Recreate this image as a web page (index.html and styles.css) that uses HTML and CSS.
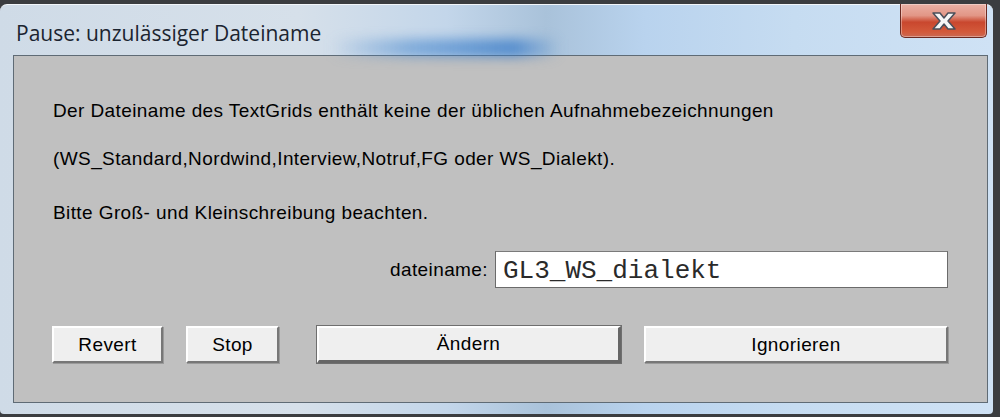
FILE: index.html
```html
<!DOCTYPE html>
<html>
<head>
	<title>Pause: unzulässiger Dateiname</title>
	<meta charset="utf-8">
	<link rel="stylesheet" href="styles.css">
</head>
<body>
	<div class="window">
		<div class="titlebar">
			<span class="title">Pause: unzulässiger Dateiname</span>
			<div class="glow"></div>
			<button class="close" title="Schließen">
				<svg width="34" height="22" viewBox="0 0 34 22">
					<path d="M6 3 L13 3 L17 8 L21 3 L28 3 L21 11 L28 19 L21 19 L17 14 L13 19 L6 19 L13 11 Z" fill="#f6f6f6" stroke="#4a4f5a" stroke-width="1.5" stroke-linejoin="round"/>
				</svg>
			</button>
		</div>
		<div class="client">
			<p class="line first">Der Dateiname des TextGrids enthält keine der üblichen Aufnahmebezeichnungen</p>
			<p class="line second">(WS_Standard,Nordwind,Interview,Notruf,FG oder WS_Dialekt).</p>
			<p class="line third">Bitte Groß- und Kleinschreibung beachten.</p>
			<div class="field">
				<label for="dateiname">dateiname:</label>
				<input type="text" id="dateiname" value="GL3_WS_dialekt">
			</div>
			<div class="buttons">
				<button class="btn btn-revert">Revert</button>
				<button class="btn btn-stop">Stop</button>
				<button class="btn btn-wide btn-default">Ändern</button>
				<button class="btn btn-wide">Ignorieren</button>
			</div>
		</div>
	</div>
</body>
</html>
```

FILE: styles.css
```css
*, *:before, *:after {
	box-sizing: border-box;
}

body {
	margin: 0;
	background: #3b3d40;
	height: 417px;
	overflow: hidden;
	font-family: 'Liberation Sans', Arial, sans-serif;
}

.window {
	margin-top: 4px;
	width: 993px;
	height: 410px;
	padding: 0 5px 11px 13px;
	border-radius: 7px 7px 4px 4px;
	border-top: 1px solid #f2f6fa;
	background: linear-gradient(90deg, #cfdbe7 0, #d6e0ea 30%, #c3d6ea 45%, #a9c2da 55%, #b9d3ee 65%, #c6dcf1 80%, #cfe2f5 100%);
	position: relative;
	display: flex;
	flex-direction: column;
}

.titlebar {
	height: 50px;
	display: flex;
	align-items: flex-start;
	position: relative;
	margin-left: -13px;
	margin-right: -5px;
	padding-left: 16px;
}

.glow {
	position: absolute;
	left: 330px;
	top: 34px;
	width: 230px;
	height: 18px;
	background: linear-gradient(90deg, rgba(70,135,205,0) 0, rgba(70,135,205,0.55) 35%, rgba(60,125,200,0.8) 80%, rgba(60,125,200,0) 100%);
	filter: blur(6px);
}

.title {
	margin-top: 14px;
	font-family: 'Open Sans', 'Noto Sans', sans-serif;
	font-size: 21px;
	color: #1b2430;
	position: relative;
	z-index: 1;
}

.close {
	margin-left: auto;
	margin-right: 6px;
	width: 87px;
	height: 34px;
	margin-top: -1px;
	border: 1px solid #6b2a22;
	border-top: none;
	border-radius: 0 0 5px 5px;
	background: linear-gradient(180deg, #eab1a6 0, #e29686 35%, #c9472e 55%, #d35a3b 85%, #c96a55 100%);
	box-shadow: inset 0 0 0 1px rgba(255,255,255,0.35);
	display: flex;
	align-items: center;
	justify-content: center;
	padding: 0;
}

.client {
	flex: 1;
	background: #c0c0c0;
	border: 1px solid #5f6b75;
	padding: 0 39px 0 38px;
	font-size: 19px;
	letter-spacing: 0.4px;
	color: #000;
}

.line {
	margin: 0;
	line-height: 20px;
	padding-left: 1px;
}

.first {
	margin-top: 45px;
}

.second {
	margin-top: 28px;
}

.third {
	margin-top: 34px;
}

.field {
	display: flex;
	justify-content: flex-end;
	align-items: center;
	margin-top: 28px;
}

.field label {
	margin-right: 7px;
}

.field input {
	width: 453px;
	height: 37px;
	border: 1px solid #6b6b6b;
	border-top-color: #7a7a7a;
	background: #fff;
	font-family: 'Liberation Mono', 'Courier New', monospace;
	font-size: 26px;
	letter-spacing: 0;
	padding: 2px 0 0 7px;
	color: #2a2a2a;
	outline: 0;
}

.buttons {
	display: flex;
	margin-top: 38px;
}

.btn {
	height: 37px;
	background: #efefef;
	border: none;
	border-top: 2px solid #fff;
	border-left: 2px solid #fff;
	border-right: 2px solid #777;
	border-bottom: 2px solid #777;
	box-shadow: 1px 1px 0 #9a9a9a;
	font-family: 'Liberation Sans', Arial, sans-serif;
	font-size: 19px;
	letter-spacing: 0.4px;
	color: #000;
	padding: 0;
}

.btn-revert {
	width: 111px;
}

.btn-stop {
	width: 93px;
	margin-left: 23px;
}

.btn-wide {
	width: 304px;
	margin-left: 23px;
}

.btn-default {
	margin-left: 38px;
	outline: 1px solid #6f6f6f;
	border-right-color: #666;
	border-bottom-color: #666;
	border-right-width: 3px;
	border-bottom-width: 3px;
}
```
